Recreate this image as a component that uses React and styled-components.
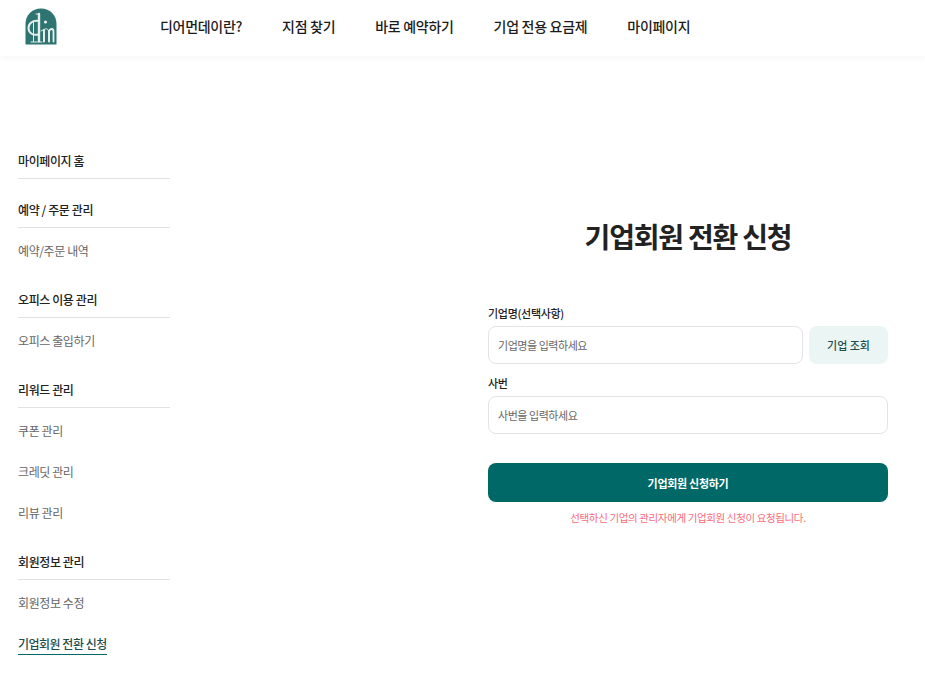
import React from 'react'
import styled, { createGlobalStyle } from 'styled-components'

const GlobalStyle = createGlobalStyle`
  body {
    margin: 0;
    background: #fff;
    font-family: "Noto Sans CJK KR", "Noto Sans", sans-serif;
    color: #222;
  }
`

const menu = [
  { title: '마이페이지 홈', links: [] },
  { title: '예약 / 주문 관리', links: ['예약/주문 내역'] },
  { title: '오피스 이용 관리', links: ['오피스 출입하기'] },
  { title: '리워드 관리', links: ['쿠폰 관리', '크레딧 관리', '리뷰 관리'] },
  { title: '회원정보 관리', links: ['회원정보 수정', '기업회원 전환 신청'] },
]

function Logo() {
  return (
    <svg width="32" height="37" viewBox="0 0 32 37">
      <path d="M0.5 36.5V16C0.5 7 7 0.5 16 0.5S31.5 7 31.5 16V36.5Z" fill="#2e7471" />
      <g fill="none" stroke="#e6efee" strokeLinecap="round">
        <path d="M13.5 13C7.5 12 3.5 15.5 3.5 20C3.5 24.5 7.5 28 13.5 26.5" strokeWidth="2" />
        <path d="M14 6V33" strokeWidth="2.4" />
        <path d="M11 6H14.5" strokeWidth="1" />
        <path d="M6 34H17" strokeWidth="1" />
        <path d="M8.5 13.5V33.5" strokeWidth="1" />
        <path d="M19 22V33.5" strokeWidth="2" />
        <path d="M16 23L19 21.5C21.5 20 23.5 21 23.5 23.5" strokeWidth="1" />
        <path d="M24 23V33.5" strokeWidth="2" />
        <path d="M24 23C25.5 20 28.5 20.5 28.5 23.5V33.5" strokeWidth="1.8" />
      </g>
      <circle cx="20.5" cy="14" r="1.6" fill="#e6efee" />
    </svg>
  )
}

export default function App() {
  return (
    <>
      <GlobalStyle />
      <Header>
        <LogoBox>
          <Logo />
        </LogoBox>
        <Nav>
          <NavItem>디어먼데이란?</NavItem>
          <NavItem>지점 찾기</NavItem>
          <NavItem>바로 예약하기</NavItem>
          <NavItem>기업 전용 요금제</NavItem>
          <NavItem>마이페이지</NavItem>
        </Nav>
      </Header>
      <Page>
        <Sidebar>
          {menu.map((group) => (
            <Group key={group.title}>
              <GroupTitle>{group.title}</GroupTitle>
              {group.links.map((link) => (
                <SideLink key={link}>
                  <SideLabel $active={link === '기업회원 전환 신청'}>{link}</SideLabel>
                </SideLink>
              ))}
            </Group>
          ))}
        </Sidebar>
        <Main>
          <Title>기업회원 전환 신청</Title>
          <Label>기업명(선택사항)</Label>
          <Row>
            <Input placeholder="기업명을 입력하세요" />
            <LookupButton>기업 조회</LookupButton>
          </Row>
          <Label>사번</Label>
          <Row>
            <Input placeholder="사번을 입력하세요" />
          </Row>
          <SubmitButton>기업회원 신청하기</SubmitButton>
          <Notice>선택하신 기업의 관리자에게 기업회원 신청이 요청됩니다.</Notice>
        </Main>
      </Page>
    </>
  )
}

const Header = styled.header`
  display: flex;
  align-items: center;
  height: 56px;
  padding-bottom: 4px;
  box-sizing: border-box;
  box-shadow: 0 2px 6px rgba(0, 0, 0, 0.04);
`
const LogoBox = styled.div`
  display: flex;
  width: 160px;
  padding-left: 25px;
  box-sizing: border-box;
`
const Nav = styled.nav`
  display: flex;
  gap: 40px;
`
const NavItem = styled.a`
  font-size: 14px;
  font-weight: 500;
  line-height: 20px;
  letter-spacing: -0.3px;
  color: #1c1c1c;
`
const Page = styled.div`
  display: flex;
  justify-content: space-between;
  padding: 94px 37px 0 18px;
`
const Sidebar = styled.aside`
  display: flex;
  flex-direction: column;
  gap: 18px;
  width: 152px;
`
const Group = styled.div`
  display: flex;
  flex-direction: column;
`
const GroupTitle = styled.div`
  font-size: 12px;
  font-weight: 500;
  line-height: 21px;
  letter-spacing: -0.4px;
  padding-bottom: 7px;
  margin-bottom: 2px;
  border-bottom: 1px solid #e2e2e2;
  color: #222;
`
const SideLink = styled.div`
  display: flex;
  font-size: 12px;
  line-height: 21px;
  letter-spacing: -0.4px;
  padding: 10px 0;
`
const SideLabel = styled.span`
  color: ${(p) => (p.$active ? '#1d4f4e' : '#666')};
  font-weight: ${(p) => (p.$active ? 500 : 400)};
  letter-spacing: ${(p) => (p.$active ? '-0.5px' : '-0.4px')};
  border-bottom: ${(p) => (p.$active ? '1px solid #006967' : 'none')};
`
const Main = styled.main`
  display: flex;
  flex-direction: column;
  width: 400px;
  padding-top: 64px;
`
const Title = styled.h1`
  margin: 0 0 47px;
  font-size: 28px;
  font-weight: 700;
  line-height: 44px;
  letter-spacing: -1.2px;
  text-align: center;
  color: #222;
`
const Label = styled.label`
  font-size: 11px;
  font-weight: 500;
  line-height: 16px;
  letter-spacing: -0.3px;
  margin-bottom: 5px;
  color: #222;
`
const Row = styled.div`
  display: flex;
  gap: 6px;
  margin-bottom: 11px;
`
const Input = styled.input`
  flex: 1;
  min-width: 0;
  height: 38px;
  box-sizing: border-box;
  padding: 0 9px;
  border: 1px solid #e4e4e6;
  border-radius: 8px;
  font-family: inherit;
  font-size: 11px;
  letter-spacing: -0.45px;
  &::placeholder {
    color: #666;
    opacity: 1;
  }
`
const LookupButton = styled.button`
  width: 79px;
  height: 38px;
  border: none;
  border-radius: 8px;
  background: #ebf6f4;
  font-family: inherit;
  font-size: 11px;
  font-weight: 500;
  color: #1f4f4d;
`
const SubmitButton = styled.button`
  height: 39px;
  margin-top: 18px;
  border: none;
  border-radius: 8px;
  background: #006967;
  font-family: inherit;
  font-size: 11px;
  font-weight: 700;
  letter-spacing: -0.3px;
  color: #fff;
`
const Notice = styled.p`
  margin: 8px 0 0;
  font-size: 10.5px;
  line-height: 16px;
  letter-spacing: -0.37px;
  text-align: center;
  color: #fb6b7c;
`
